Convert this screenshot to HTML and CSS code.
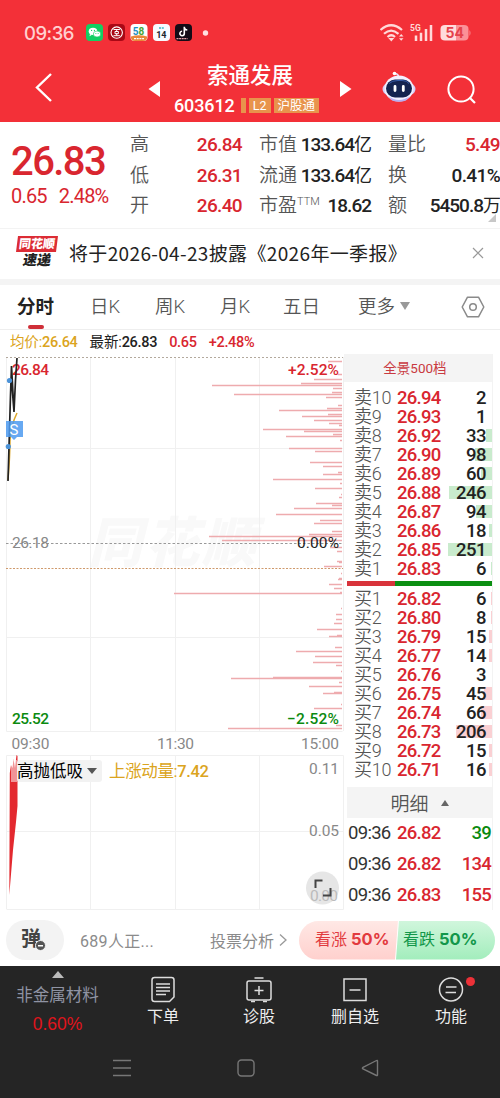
FILE: index.html
```html
<!DOCTYPE html>
<html lang="zh-CN">
<head>
    <meta charset="UTF-8">
    <meta name="viewport" content="width=device-width, initial-scale=1.0">
    <title>索通发展 603612</title>
    <link rel="stylesheet" href="styles.css">
</head>
<body>
    <header>
        <div class="status">
            <span class="clock">09:36</span>
            <svg class="apps" width="130" height="18" viewBox="0 0 130 18">
                <rect x="0" y="0" width="17" height="17" rx="4" fill="#12cf62"/>
                <ellipse cx="7" cy="7.3" rx="4.3" ry="3.6" fill="#fff"/>
                <path d="M4 10l-.5 2.2 2.5-1.5z" fill="#fff"/>
                <ellipse cx="11" cy="10" rx="3.7" ry="3" fill="#fff" stroke="#12cf62" stroke-width=".6"/>
                <g fill="#12cf62"><circle cx="5.6" cy="6.4" r=".6"/><circle cx="8.4" cy="6.4" r=".6"/><circle cx="9.9" cy="9.4" r=".5"/><circle cx="12.1" cy="9.4" r=".5"/></g>
                <rect x="22" y="0" width="17" height="17" rx="4" fill="#a90815"/>
                <circle cx="30.7" cy="8.6" r="5.7" fill="none" stroke="#fff" stroke-width="1.1"/>
                <path d="M27.5 5.5h6.4M27.5 11.7h6.4M29 7.5h3.4v2.2H29zM30.7 5.5v2M30.7 9.7v2" fill="none" stroke="#fff" stroke-width="1"/>
                <rect x="44.5" y="0" width="17" height="17" rx="4" fill="#fff"/>
                <text x="46.8" y="10.5" class="app58"><tspan fill="#1d8fc4">5</tspan><tspan fill="#48a534">8</tspan></text>
                <path d="M45 12.5q8-2.5 16 0v1q0 3.500-4 3.500h-8q-4 0-4-3.500z" fill="#e9883a"/>
                <path d="M48 14.7h10" stroke="#fff" stroke-width="1.3" stroke-dasharray="2 .7"/>
                <rect x="67" y="0" width="17" height="17" rx="4" fill="#f7faff"/>
                <path d="M73 4h5" stroke="#3cb6c4" stroke-width="1.5" stroke-dasharray="2 .8"/>
                <text x="75.3" y="13.5" class="app14" text-anchor="middle">14</text>
                <rect x="89" y="0" width="17" height="17" rx="4" fill="#130b16"/>
                <path d="M98.3 2.800v6.700a2.200 2.200 0 1 1-2.200-2.200M98.300 3.300q.5 2.500 3 2.700" fill="none" stroke="#fff" stroke-width="1.6"/>
                <path d="M90.500 14.700h11" stroke="#e8a0a8" stroke-width="1.3" stroke-dasharray="2 .6"/>
                <circle cx="119.500" cy="9" r="2.700" fill="#ffe0e0"/>
            </svg>
            <svg class="signal" width="92" height="20" viewBox="0 0 92 20">
                <g fill="none" stroke="#ffd9d9" stroke-width="2.2">
                    <path d="M.5 7q10.500-9.500 21.500 0"/>
                    <path d="M4 10.800q7-6.500 14.500 0"/>
                    <path d="M7.500 14q3.800-3.500 7.500 0"/>
                </g>
                <path d="M8.300 15h6l-3 3.500zM19 13.500l2.200-2.500 2.300 2.500zM19 15.300h4.500l-2.300 2.500z" fill="#ffd9d9"/>
                <text x="30" y="8" class="net">5G</text>
                <path d="M36 12.500v5.500M41 9.700v8.300M46 6v12M51 2v16" stroke="#ffd9d9" stroke-width="2.500"/>
                <path d="M65 2h11v15.500H65q-4.500 0-4.500-4V6q0-4 4.500-4z" fill="#ffdcdc"/>
                <path d="M76 2h8q4.500 0 4.500 4v7.500q0 4-4.500 4h-8z" fill="#fb9197"/>
                <path d="M89.500 7q2 3 0 6z" fill="#fb9197"/>
                <text x="74.800" y="15" class="batt" text-anchor="middle">54</text>
            </svg>
        </div>
        <div class="nav">
            <svg class="back" width="20" height="32" viewBox="0 0 20 32"><path d="M17 2L3 15.500 17 29" fill="none" stroke="#fff" stroke-width="2.400"/></svg>
            <svg class="prev" width="12" height="18" viewBox="0 0 12 18"><path d="M12 1v16L.5 9z" fill="#fff"/></svg>
            <div class="title">
                <h1>索通发展</h1>
                <p><span class="code">603612</span><i class="tag-bar"></i><span class="tag">L2</span><span class="tag">沪股通</span></p>
            </div>
            <svg class="next" width="12" height="18" viewBox="0 0 12 18"><path d="M0 1v16L11.500 9z" fill="#fff"/></svg>
            <svg class="robot" width="34" height="34" viewBox="0 0 34 34">
                <path d="M16.500 7q0-3-3.500-3.500" fill="none" stroke="#e9e4ff" stroke-width="1.500"/>
                <circle cx="12.500" cy="3.500" r="1.800" fill="#fff"/>
                <ellipse cx="17" cy="19" rx="16.500" ry="9" fill="#d6cffa"/>
                <ellipse cx="17" cy="18.500" rx="14.500" ry="13" fill="#f4f0ff"/>
                <path d="M6 26q11 8 22 0l-4 4.500q-7 2.500-14 0z" fill="#b6aef2"/>
                <rect x="4" y="9.500" width="26" height="18" rx="9" fill="#15234f"/>
                <path d="M7 13.500q3-3 9-3h4q5 0 7 3" stroke="#355aa6" stroke-width="1" fill="none"/>
                <path d="M13 16.500v4M21.300 16.500v4" stroke="#fff" stroke-width="2.800" stroke-linecap="round"/>
            </svg>
            <svg class="search" width="30" height="30" viewBox="0 0 30 30"><circle cx="14" cy="14" r="12.600" fill="none" stroke="#fff" stroke-width="2"/><path d="M22.500 22.500L28 28" stroke="#fff" stroke-width="2.200"/></svg>
        </div>
    </header>

    <section class="quote">
        <div class="price">
            <strong>26.83</strong>
            <p><span>0.65</span><span>2.48%</span></p>
        </div>
        <div class="stats">
            <div><label>高</label><b class="up">26.84</b></div>
            <div><label>市值</label><b>133.64<small>亿</small></b></div>
            <div><label>量比</label><b class="up">5.49</b></div>
            <div><label>低</label><b class="up">26.31</b></div>
            <div><label>流通</label><b>133.64<small>亿</small></b></div>
            <div><label>换</label><b>0.41%</b></div>
            <div><label>开</label><b class="up">26.40</b></div>
            <div><label>市盈<sup>TTM</sup></label><b>18.62</b></div>
            <div><label>额</label><b>5450.8<small>万</small></b></div>
        </div>
        <i class="corner"></i>
    </section>

    <section class="notice">
        <div class="brand"><span>同花顺</span><em>速递</em></div>
        <p>将于2026-04-23披露《2026年一季报》</p>
        <svg width="12" height="12" viewBox="0 0 12 12"><path d="M1 1l10 10M11 1L1 11" stroke="#999" stroke-width="1.200"/></svg>
    </section>

    <nav class="tabs">
        <a class="active">分时</a>
        <a>日K</a>
        <a>周K</a>
        <a>月K</a>
        <a>五日</a>
        <a class="more">更多<i></i></a>
        <svg width="24" height="22" viewBox="0 0 24 22"><path d="M6.500 1.200h11L22.800 11l-5.300 9.800h-11L1.200 11z" fill="none" stroke="#8a8a8a" stroke-width="1.500" stroke-linejoin="round"/><circle cx="12" cy="11" r="3.300" fill="none" stroke="#8a8a8a" stroke-width="1.500"/></svg>
    </nav>

    <div class="summary">
        <span class="avg">均价:<b>26.64</b></span>
        <span>最新:<b>26.83</b></span>
        <span class="up"><b>0.65</b></span>
        <span class="up"><b>+2.48%</b></span>
    </div>

    <main>
        <div class="charts">
            <svg width="344" height="556" viewBox="0 354 344 556">
                <!-- watermark -->
                <text x="88" y="562" class="mark" textLength="168">同花顺</text>
                <!-- grid -->
                <path d="M6.500 357V731.500H342.500M90.500 357V731M175.500 357V731M259.500 357V731M6 448.500H343M6 637.500H343M343.500 357V731" class="grid"/>
                <path d="M6.500 909V755.500H343.500V909.500H6.500M90.500 755V909M175.500 755V909M259.500 755V909M6 831.500H343" class="grid"/>
                <!-- volume by price -->
                <path class="vol" d="M328 361.500H342M338 374.500H342M314 379.500H342M301 383.500H342M212 385.500H342M333 388.500H342M332 392.500H342M234 394.500H342M326 397.500H342M338 405.500H342M327 408.500H342M279 410.500H342M328 414.500H342M302 416.500H342M314 420.500H342M329 423.500H342M339 425.500H342M263 429.500H342M304 431.500H342M333 434.500H342M286 436.500H342M340 440.500H342M289 448.500H342M315 451.500H342M310 462.500H342M323 466.500H342M338 472.500H342M323 474.500H342M273 479.500H342M340 483.500H342M315 488.500H342M341 494.500H342M339 497.500H342M316 503.500H342M332 505.500H342M294 508.500H342M276 514.500H342M320 520.500H342M314 523.500H342M332 531.500H342M309 534.500H342M209 536.500H342M222 540.500H342M330 547.500H342M337 551.500H342M337 561.500H342M339 562.500H342M324 566.500H342M341 573.500H342M339 578.500H342M338 579.500H342M329 584.500H342M334 588.500H342M340 592.500H342M174 593.500H342M341 608.500H342M336 614.500H342M336 619.500H342M334 623.500H342M317 629.500H342M337 635.500H342M329 636.500H342M335 647.500H342M296 651.500H342M315 656.500H342M313 662.500H342M336 665.500H342M341 671.500H342M273 677.500H342M231 678.500H342M339 682.500H342M309 686.500H342M334 692.500H342M323 693.500H342M341 704.500H342M314 708.500H342M336 725.500H342M228 728.500H342"/>
                <path d="M6 357.500H343" stroke="#b3a99d" stroke-dasharray="2 2"/>
                <path d="M6 543.500H343" stroke="#999" stroke-dasharray="2.500 2"/>
                <path d="M6 568.500H343" stroke="#cf9a6c" stroke-dasharray="2 1.500"/>
                <text x="12" y="374.500" class="num up" textLength="37">26.84</text>
                <text x="12" y="547.500" class="num mid" textLength="37">26.18</text>
                <text x="12" y="723.500" class="num down" textLength="37">25.52</text>
                <text x="288" y="374.500" class="num up" textLength="51">+2.52%</text>
                <text x="297" y="547.500" class="num zero" textLength="42">0.00%</text>
                <text x="287" y="723.500" class="num down" textLength="52">−2.52%</text>
                <!-- price line -->
                <path d="M8 480q2-25 2-40 1-15 7-27" fill="none" stroke="#dca72c" stroke-width="1.500"/>
                <path d="M8 481L10.500 395 11.500 366 14 412 15.500 380 17 358M11.500 366l.5 20 2 26" fill="none" stroke="#222" stroke-width="1.700"/>
                <path d="M6 421h17v16h-6l-3 3-3-3H6z" fill="#4c9af0" opacity=".85"/>
                <text x="14" y="434.500" class="sell" text-anchor="middle">S</text>
                <circle cx="9.500" cy="380.500" r="2.600" fill="#4c93d8"/>
                <circle cx="8.300" cy="446.500" r="2.600" fill="#4c93d8"/>
                <!-- time axis -->
                <text x="11.500" y="749" class="num axis" textLength="38">09:30</text>
                <text x="157" y="749" class="num axis" textLength="37">11:30</text>
                <text x="301" y="749" class="num axis" textLength="38">15:00</text>
                <!-- indicator -->
                <path d="M9.300 895L9.800 773 11 765 12.500 768 13.500 759 15 768 16.500 755 17.500 756V806L16 822 13 850z" fill="#e3292f"/>
                <rect x="17" y="760" width="85" height="22" rx="3" fill="#f2f2f2"/>
                <rect x="11" y="760" width="6" height="22" fill="#fff" opacity=".5"/>
                <text x="17" y="777" class="pick" textLength="66">高抛低吸</text>
                <path d="M87 768h10l-5 6z" fill="#555"/>
                <text x="109" y="777" class="pick avg" textLength="100">上涨动量:<tspan class="val">7.42</tspan></text>
                <text x="309" y="774" class="num small" textLength="30">0.11</text>
                <text x="309" y="835.500" class="num small" textLength="30">0.05</text>
                <circle cx="322.500" cy="888" r="16.500" fill="#e6e6e6"/>
                <text x="310" y="901" class="num small faint" textLength="28">0.00</text>
                <path d="M315.500 888v-7.500h7M330.500 888v7.500h-7.500" fill="none" stroke="#444" stroke-width="2"/>
            </svg>
        </div>

        <aside class="book">
            <h3>全景500档</h3>
            <ul id="sells"></ul>
            <div class="ratio"></div>
            <ul id="buys"></ul>
            <h4>明细<i></i></h4>
            <div class="deal"><span>09:36</span><b>26.82</b><b class="down">39</b></div>
            <div class="deal"><span>09:36</span><b>26.82</b><b>134</b></div>
            <div class="deal"><span>09:36</span><b>26.83</b><b>155</b></div>
        </aside>
    </main>

    <section class="vote">
        <div class="danmu">弹<i></i></div>
        <span class="people">689人正...</span>
        <span class="analyse">投票分析<svg width="8" height="14" viewBox="0 0 8 14"><path d="M1 1.500L7 7l-6 5.500" fill="none" stroke="#999" stroke-width="1.300"/></svg></span>
        <div class="poll">
            <div class="bull">看涨 <b>50%</b></div>
            <div class="bear">看跌 <b>50%</b></div>
        </div>
    </section>

    <footer>
        <div class="tools">
            <div class="sector"><i></i><span>非金属材料</span><b>0.60%</b></div>
            <a>
                <svg width="26" height="28" viewBox="0 0 26 28"><path d="M4.500 1.500h17q2.500 0 2.500 2.500v17l-4.500 4.500h-15Q2 25.500 2 23V4q0-2.500 2.500-2.500zM6 8h14M6 11.500h14M6 15h14M6 18.500h10"/></svg>
                下单
            </a>
            <a>
                <svg width="28" height="28" viewBox="0 0 28 28"><rect x="2" y="5" width="24" height="19" rx="2"/><path d="M9.500 2h9M14 10v9M9.500 14.500h9M6 25.500h4M18 25.500h4"/></svg>
                诊股
            </a>
            <a>
                <svg width="26" height="28" viewBox="0 0 26 28"><path d="M2 3h22v21.500H2zM7.500 14h11"/></svg>
                删自选
            </a>
            <a>
                <svg width="26" height="28" viewBox="0 0 26 28"><circle cx="13" cy="13.500" r="11.500"/><path d="M8 11h10.500M7.500 16.500h10.500"/></svg>
                功能
                <i class="dot"></i>
            </a>
        </div>
        <div class="keys">
            <svg width="18" height="18" viewBox="0 0 18 18"><path d="M0 1.500h18M0 9h18M0 16.500h18"/></svg>
            <svg width="18" height="18" viewBox="0 0 18 18"><rect x="1" y="1" width="16" height="16" rx="3.500"/></svg>
            <svg width="18" height="18" viewBox="0 0 18 18"><path d="M16.500 2v14q0 1-1 .5L2 10q-1.200-.8 0-1.600L15.500 1.500q1-.5 1 .5z"/></svg>
        </div>
    </footer>

    <script>
        // [档位, 价格, 数量, 背景条宽度]
        const sells = [
            ['卖10', '26.94', 2, 0], ['卖9', '26.93', 1, 0], ['卖8', '26.92', 33, 6],
            ['卖7', '26.90', 98, 17], ['卖6', '26.89', 60, 11], ['卖5', '26.88', 246, 43],
            ['卖4', '26.87', 94, 16], ['卖3', '26.86', 18, 3], ['卖2', '26.85', 251, 44],
            ['卖1', '26.83', 6, 1]
        ];
        const buys = [
            ['买1', '26.82', 6, 1], ['买2', '26.80', 8, 1], ['买3', '26.79', 15, 3],
            ['买4', '26.77', 14, 3], ['买5', '26.76', 3, 0], ['买6', '26.75', 45, 8],
            ['买7', '26.74', 66, 11], ['买8', '26.73', 206, 36], ['买9', '26.72', 15, 3],
            ['买10', '26.71', 16, 3]
        ];

        function fill(id, rows) {
            document.getElementById(id).innerHTML = rows.map(r =>
                `<li><span>${r[0]}</span><b>${r[1]}</b><em>${r[2]}</em><i style="width:${r[3]}px"></i></li>`
            ).join('');
        }

        fill('sells', sells);
        fill('buys', buys);
    </script>
</body>
</html>
```

FILE: styles.css
```css
* {
    box-sizing: border-box;
}

body {
    margin: 0;
    width: 500px;
    height: 1098px;
    overflow: hidden;
    background: #fff;
    color: #222;
    font-family: Roboto, "Noto Sans CJK SC", sans-serif;
}

h1, h3, h4, p, ul {
    margin: 0;
    padding: 0;
    font-weight: 400;
}

i, em {
    font-style: normal;
}

svg {
    display: block;
    flex: none;
}

.up {
    color: #d9262f;
    fill: #d9262f;
}

.down {
    color: #0b8a0f;
    fill: #0b8a0f;
}

.avg {
    color: #dba420;
    fill: #dba420;
}

/* header */
header {
    height: 122px;
    background: #f33038;
    color: #fff;
}

.status {
    display: flex;
    align-items: center;
    height: 50px;
    padding: 16px 31px 0 24px;
}

.clock {
    width: 62px;
    font: 500 18.5px/20px Inter, sans-serif;
    letter-spacing: -0.5px;
    color: #ffd0d0;
}

.signal {
    margin-left: auto;
    margin-right: -3px;
}

.app58 {
    font: 700 10px Roboto, sans-serif;
}

.app14 {
    font: 700 9px Roboto, sans-serif;
    fill: #1b2430;
}

.net {
    font: 700 8.5px Roboto, sans-serif;
    fill: #ffd9d9;
}

.batt {
    font: 700 14px Inter, sans-serif;
    fill: #e5424b;
}

.nav {
    display: flex;
    height: 72px;
    padding-left: 34px;
}

.back {
    margin-top: 22px;
}

.prev {
    margin: 30px 0 0 94px;
}

.title {
    width: 180px;
    text-align: center;
}

.title h1 {
    margin-top: 11px;
    font-size: 21.5px;
    line-height: 30px;
    font-weight: 500;
}

.title p {
    display: flex;
    justify-content: center;
    align-items: center;
    height: 28px;
    gap: 3px;
    margin-left: -7px;
}

.code {
    font-size: 18px;
    font-weight: 500;
    letter-spacing: -0.1px;
    margin-right: 3px;
}

.tag-bar {
    width: 5px;
    height: 15px;
    background: #e8944c;
}

.tag {
    height: 15px;
    padding: 0 4px;
    background: #e8944c;
    font-size: 12.5px;
    line-height: 15px;
}

.next {
    margin-top: 30px;
}

.robot {
    margin: 20px 0 0 30px;
}

.search {
    margin: 25px 0 0 31px;
}

/* quote */
.quote {
    position: relative;
    display: flex;
    height: 107px;
    padding-top: 8px;
    border-bottom: 1px solid #f3f3f3;
}

.price {
    width: 130px;
    padding: 11px 0 0 11px;
    color: #d9262f;
}

.price strong {
    display: block;
    font-size: 40px;
    line-height: 42px;
    font-weight: 500;
    letter-spacing: -1.6px;
}

.price p {
    display: flex;
    gap: 12px;
    margin-top: 1px;
    font-size: 20px;
    line-height: 24px;
    letter-spacing: -0.8px;
}

.stats {
    display: grid;
    grid-template-columns: 112px 112px 112px;
    grid-auto-rows: 30.5px;
    column-gap: 17px;
}

.stats div {
    display: flex;
    justify-content: space-between;
    align-items: center;
    white-space: nowrap;
    line-height: 30px;
}

.stats label {
    color: #555;
    font-size: 19px;
    font-weight: 350;
}

.stats b {
    font-size: 19px;
    font-weight: 500;
    letter-spacing: -0.65px;
}

.stats small {
    font-size: 18px;
    font-weight: 400;
}

.stats div:nth-child(3n+2) b,
.stats div:last-child b {
    letter-spacing: -1px;
}

sup {
    font-size: 11px;
    line-height: 0;
    vertical-align: 7px;
}

.corner {
    position: absolute;
    right: 4px;
    bottom: 6px;
    border-left: 8px solid transparent;
    border-bottom: 8px solid #c8c8c8;
}

/* notice */
.notice {
    display: flex;
    align-items: center;
    height: 56px;
    padding: 0 16px 3px 17px;
    border-bottom: 6px solid #f4f4f4;
}

.brand {
    width: 52px;
    text-align: center;
    line-height: 17px;
}

.brand span {
    display: block;
    width: 40px;
    height: 16px;
    background: #dc2c35;
    color: #fff;
    font-size: 12px;
    font-weight: 900;
    line-height: 16px;
    transform: skewX(-7deg);
}

.brand em {
    display: block;
    width: 40px;
    font-size: 14px;
    font-weight: 900;
    transform: skewX(-10deg);
}

.notice p {
    flex: 1;
    font-size: 19px;
    letter-spacing: 0.35px;
    white-space: nowrap;
    font-family: "Noto Sans CJK SC", sans-serif;
}

/* tabs */
.tabs {
    display: flex;
    align-items: center;
    height: 45px;
    padding-left: 17px;
    border-bottom: 1px solid #eee;
    color: #555;
    font-size: 18.5px;
    font-weight: 350;
}

.tabs a {
    position: relative;
    width: 65px;
    line-height: 46px;
    white-space: nowrap;
}

.tabs a.active {
    width: 73px;
    color: #222;
    font-weight: 700;
}

.active::after {
    content: "";
    position: absolute;
    left: 11px;
    bottom: 1px;
    width: 16px;
    height: 4px;
    border-radius: 2px;
    background: #cf2f38;
}

.tabs a:nth-child(5) {
    width: 75px;
    left: -2px;
}

.tabs a.more {
    width: 101px;
    left: -2px;
}

.more i {
    display: inline-block;
    margin: 0 0 3px 5px;
    border: 5.5px solid transparent;
    border-top: 8px solid #999;
    border-bottom: 0;
}

.summary {
    display: flex;
    align-items: baseline;
    gap: 12px;
    height: 24px;
    padding: 2px 0 0 10px;
    font-size: 14.5px;
    line-height: 22px;
    letter-spacing: -0.15px;
}

.summary b {
    font-weight: 500;
    letter-spacing: -0.3px;
}

/* charts */
main {
    display: flex;
    height: 556px;
}

.charts {
    width: 344px;
}

.grid {
    fill: none;
    stroke: #f0f0f0;
}

.vol {
    fill: none;
    stroke: #eeabae;
    stroke-width: 1.3;
}

.mark {
    font-size: 54px;
    font-weight: 900;
    font-style: italic;
    fill: #f9f9f9;
}

.num {
    font-size: 15.5px;
    font-weight: 500;
}

.num.mid, .num.axis, .num.small {
    font-weight: 400;
    fill: #888;
}

.num.zero {
    font-weight: 400;
    fill: #222;
}

.num.faint {
    fill: #bbb;
}

.pick {
    font-size: 16.5px;
}

.val {
    font-weight: 500;
}

.sell {
    font-size: 15px;
    fill: #fff;
}

/* order book */
.book {
    width: 149px;
    padding-left: 3px;
    border-right: 1px solid #f3f3f3;
}

.book h3 {
    height: 28px;
    margin: 0 0 5.5px -3px;
    padding-right: 6px;
    background: #f4f4f4;
    color: #c93a41;
    font-size: 13.5px;
    line-height: 28px;
    text-align: center;
}

.book ul {
    list-style: none;
}

.book li {
    position: relative;
    display: flex;
    align-items: baseline;
    height: 19px;
    padding: 0 6px 0 7px;
    line-height: 19px;
    white-space: nowrap;
}

.book li span {
    width: 43px;
    color: #555;
    font-size: 18px;
    font-weight: 350;
    letter-spacing: -0.2px;
}

.book b {
    color: #d9262f;
    font-size: 18.5px;
    font-weight: 500;
    letter-spacing: -0.75px;
}

.book em {
    position: relative;
    z-index: 1;
    margin-left: auto;
    font-size: 18.5px;
    font-weight: 500;
    letter-spacing: -0.5px;
}

/* quantity bar under the number */
.book li i {
    position: absolute;
    right: 0;
    top: 3px;
    height: 13px;
    background: #c9ebcd;
}

#buys i {
    background: #fad0d3;
}

.ratio {
    height: 5px;
    margin: 3px 0;
    background: linear-gradient(to right, #d8333b 33%, #0b8f12 33%);
}

.book h4 {
    display: flex;
    align-items: center;
    justify-content: center;
    gap: 12px;
    height: 31px;
    margin: 8.5px 0 -1px;
    background: #f4f4f4;
    color: #555;
    font-size: 19px;
    font-weight: 350;
}

.book h4 i {
    border: 4px solid transparent;
    border-bottom: 6px solid #666;
    border-top: 0;
}

.deal {
    display: flex;
    align-items: center;
    height: 31px;
    padding: 0 1px;
    font-size: 18.5px;
    letter-spacing: -0.7px;
}

.deal span {
    width: 49px;
    color: #333;
}

.deal b:last-child {
    margin-left: auto;
}

.book .deal b.down {
    color: #0b8a0f;
}

/* vote */
.vote {
    display: flex;
    align-items: center;
    height: 56px;
    padding: 4px 5px 0 6px;
    color: #8b8b8b;
    font-size: 16px;
}

.danmu {
    position: relative;
    width: 58px;
    height: 40px;
    padding-left: 15px;
    border-radius: 20px;
    background: #f3f3f3;
    color: #444;
    font-size: 20px;
    line-height: 38px;
    font-weight: 700;
}

.danmu i {
    position: absolute;
    left: 29px;
    top: 20px;
    width: 11px;
    height: 11px;
    border: 1px solid #f3f3f3;
    border-radius: 50%;
    background: linear-gradient(#fff, #fff) center / 5px 1.5px no-repeat #555;
}

.people {
    width: 130px;
    padding-left: 16px;
    letter-spacing: 0.3px;
}

.analyse {
    display: flex;
    align-items: center;
    gap: 5px;
    width: 105px;
    padding-left: 16px;
    white-space: nowrap;
}

.poll {
    display: flex;
    width: 196px;
    height: 39px;
    border-radius: 20px;
    overflow: hidden;
}

.poll div {
    line-height: 38px;
    white-space: nowrap;
}

.poll b {
    font: 700 16.5px Inter, sans-serif;
}

.bull {
    width: 99px;
    padding-left: 16px;
    color: #e23a3e;
    background: linear-gradient(#ffe8e5, #ffd0cd);
    clip-path: polygon(0 0, 100% 0, 97% 100%, 0 100%);
}

.bear {
    width: 99px;
    margin-left: -2px;
    padding-left: 7px;
    color: #12974a;
    background: linear-gradient(#d0f6dc, #a2edbc);
    clip-path: polygon(3% 0, 100% 0, 100% 100%, 0 100%);
}

/* footer */
footer {
    height: 132px;
    background: #252525;
    color: #eee;
}

.tools {
    display: flex;
    height: 84px;
    padding-left: 15px;
}

.tools a, .sector {
    position: relative;
    display: flex;
    flex-direction: column;
    align-items: center;
    width: 96px;
    font-size: 16px;
    line-height: 24px;
}

.tools a {
    padding-top: 10px;
}

.tools svg {
    fill: none;
    stroke: #ddd;
    stroke-width: 1.5;
    margin-bottom: 1px;
}

.sector {
    width: 85px;
    margin-right: 15px;
    padding-top: 5px;
    color: #8f93a3;
    font-size: 16.5px;
    white-space: nowrap;
}

.sector i {
    border: 6px solid transparent;
    border-bottom: 7px solid #bbb;
    border-top: 0;
    margin-bottom: 6px;
}

.sector b {
    margin-top: 4px;
    color: #e0141c;
    font: 400 17.5px/24px "Liberation Sans", sans-serif;
}

.dot {
    position: absolute;
    right: 24px;
    top: 11px;
    width: 9px;
    height: 9px;
    border-radius: 50%;
    background: #ec3138;
}

.keys {
    display: flex;
    gap: 106px;
    padding: 9px 0 0 113px;
}

.keys svg {
    fill: none;
    stroke: #777;
    stroke-width: 1.4;
}
```
